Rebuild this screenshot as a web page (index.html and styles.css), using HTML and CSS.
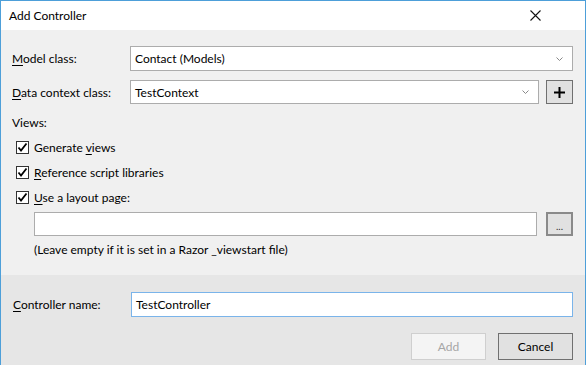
FILE: index.html
```html
<!DOCTYPE html>
<html>
<head>
<meta name="viewport" content="width=device-width, initial-scale=1">
<link rel="stylesheet" href="styles.css">
</head>
<body>

<div class="dialog">

<div class="titlebar">
  <span class="title">Add Controller</span>
  <svg class="closeIcon" width="11" height="11" viewBox="0 0 11 11"><path d="M0.5 0.5 L10.5 10.5 M10.5 0.5 L0.5 10.5" stroke="#111" stroke-width="1.1" fill="none"/></svg>
</div>

<div class="content">
  <div class="fieldRow firstRow">
    <span class="label"><u>M</u>odel class:</span>
    <div class="combo wide">
      <span>Contact (Models)</span>
      <svg class="chevron" width="7" height="4" viewBox="0 0 7 4"><path d="M0.5 0.5 L3.5 3.5 L6.5 0.5" stroke="#888" fill="none"/></svg>
    </div>
  </div>

  <div class="fieldRow secondRow">
    <span class="label"><u>D</u>ata context class:</span>
    <div class="combo">
      <span>TestContext</span>
      <svg class="chevron" width="7" height="4" viewBox="0 0 7 4"><path d="M0.5 0.5 L3.5 3.5 L6.5 0.5" stroke="#888" fill="none"/></svg>
    </div>
    <button class="smallBtn plusBtn">
      <svg width="11" height="11" viewBox="0 0 11 11"><path d="M5.5 0 V11 M0 5.5 H11" stroke="#000" stroke-width="2" fill="none"/></svg>
    </button>
  </div>

  <div class="viewsLabel">Views:</div>

  <div class="checkRow">
    <span class="checkbox"><svg width="11" height="11" viewBox="0 0 11 11"><path d="M1.5 5.5 L4 8.5 L9.5 1.5" stroke="#000" stroke-width="1.8" fill="none"/></svg></span>
    <span>Generate <u>v</u>iews</span>
  </div>
  <div class="checkRow">
    <span class="checkbox"><svg width="11" height="11" viewBox="0 0 11 11"><path d="M1.5 5.5 L4 8.5 L9.5 1.5" stroke="#000" stroke-width="1.8" fill="none"/></svg></span>
    <span><u>R</u>eference script libraries</span>
  </div>
  <div class="checkRow">
    <span class="checkbox"><svg width="11" height="11" viewBox="0 0 11 11"><path d="M1.5 5.5 L4 8.5 L9.5 1.5" stroke="#000" stroke-width="1.8" fill="none"/></svg></span>
    <span><u>U</u>se a layout page:</span>
  </div>

  <div class="layoutRow">
    <div class="textBox layoutBox"></div>
    <button class="smallBtn dotsBtn">...</button>
  </div>
  <div class="hint">(Leave empty if it is set in a Razor _viewstart file)</div>
</div>

<div class="footer">
  <div class="fieldRow">
    <span class="label"><u>C</u>ontroller name:</span>
    <div class="textBox focused">TestController</div>
  </div>
  <div class="buttons">
    <button class="dlgBtn disabled">Add</button>
    <button class="dlgBtn">Cancel</button>
  </div>
</div>

</div>

</body>
</html>
```

FILE: styles.css
```css
body {
  margin: 0;
  padding: 0;
  font-family: "Segoe UI", Lato, "Noto Sans", sans-serif;
  font-size: 12px;
  color: #000;
  background-color: #f0f0f0;
}

.dialog {
  width: 584px;
  height: 364px;
  border: 1px solid #4d9fd9;
  border-bottom: none;
  background-color: #f0f0f0;
  display: flex;
  flex-direction: column;
}

.titlebar {
  height: 29px;
  background-color: #fff;
  display: flex;
  align-items: center;
  justify-content: space-between;
  padding: 0 44px 0 8px;
}

.content {
  padding: 16px 12px 0 11px;
  height: 229px;
}

.fieldRow {
  display: flex;
  align-items: center;
}

.label {
  width: 118px;
  flex: none;
}

u {
  text-decoration-thickness: 1px;
  text-underline-offset: 2px;
}

.combo {
  flex: 1;
  height: 23px;
  border: 1px solid #acacac;
  background-color: #fff;
  display: flex;
  align-items: center;
  justify-content: space-between;
  padding: 0 9px 0 4px;
}

.secondRow {
  margin-top: 9px;
}

.secondRow .combo {
  height: 22px;
}

.smallBtn {
  flex: none;
  width: 27px;
  height: 24px;
  margin-left: 7px;
  border: 1px solid #707070;
  background-color: #e1e1e1;
  padding: 0;
  display: flex;
  align-items: center;
  justify-content: center;
  font-family: inherit;
}

.viewsLabel {
  margin-top: 10px;
  height: 18px;
  line-height: 18px;
}

.checkRow {
  display: flex;
  align-items: center;
  height: 18px;
  margin-top: 6px;
  padding-left: 4px;
}

.checkRow + .checkRow {
  margin-top: 7px;
}

.checkbox {
  width: 11px;
  height: 11px;
  border: 1px solid #333;
  background-color: #fff;
  margin-right: 5px;
  display: flex;
}

.layoutRow {
  display: flex;
  margin-top: 6px;
  padding-left: 22px;
}

.textBox {
  flex: 1;
  height: 22px;
  border: 1px solid #acacac;
  background-color: #fff;
  display: flex;
  align-items: center;
  padding-left: 4px;
}

.layoutBox {
  margin-right: 2px;
}

.dotsBtn {
  border-color: #8a8a8a;
  border-width: 2px;
  font-size: 10px;
  color: #333;
  padding-top: 3px;
}

.hint {
  margin-top: 6px;
  padding-left: 22px;
}

.footer {
  flex: 1;
  background-color: #e6e6e6;
  padding: 17px 12px 0 12px;
}

.textBox.focused {
  border-color: #7ab4ea;
  height: 23px;
}

.buttons {
  display: flex;
  justify-content: flex-end;
  gap: 12px;
  margin-top: 16px;
}

.dlgBtn {
  width: 75px;
  height: 27px;
  border: 1px solid #adadad;
  background-color: #e1e1e1;
  font-family: inherit;
  font-size: 12px;
  color: #000;
  padding: 0;
}

.dlgBtn.disabled {
  background-color: #f4f4f4;
  border-color: #cfcfcf;
  color: #a6a6a6;
}

.dlgBtn + .dlgBtn {
  border-color: #707070;
}
```
